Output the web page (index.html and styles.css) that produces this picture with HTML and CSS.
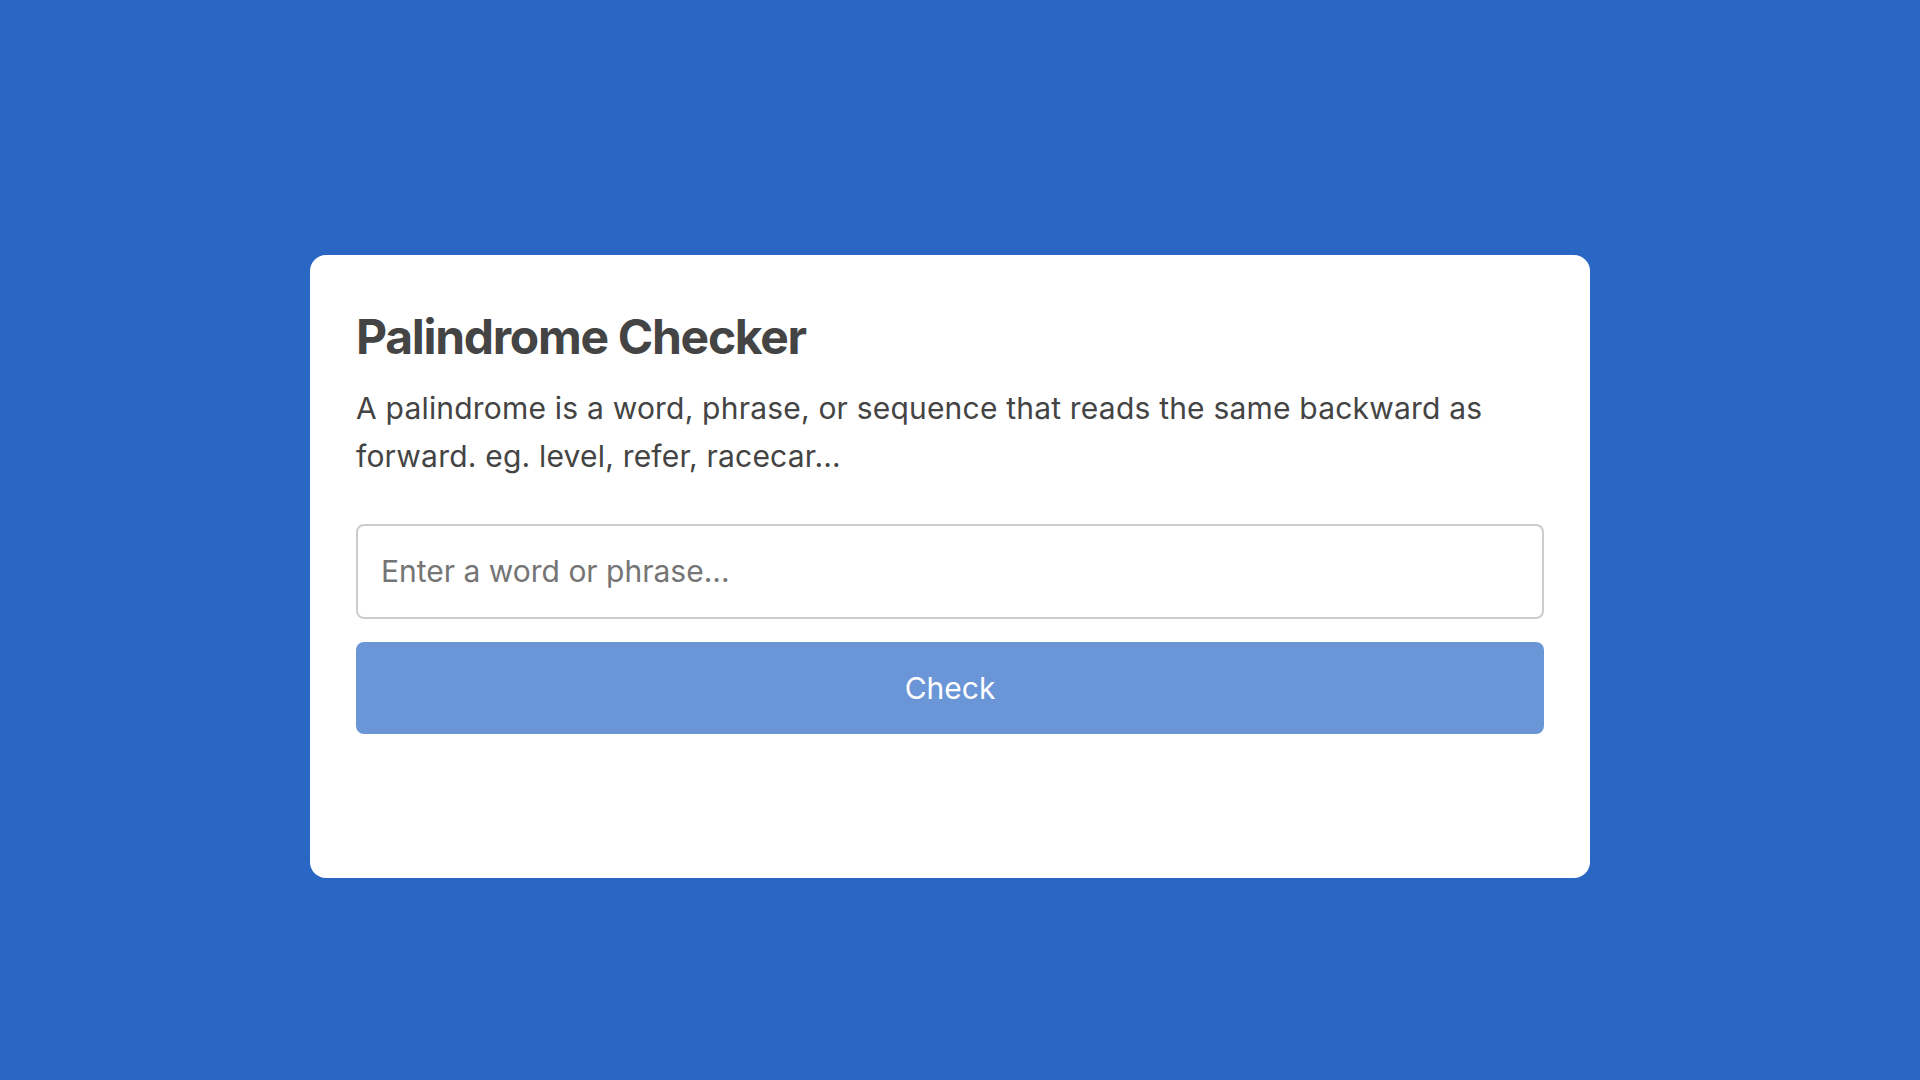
FILE: index.html
```html
<!DOCTYPE html>
<html lang="en">
<head>
    <meta charset="UTF-8">
    <meta name="viewport" content="width=device-width, initial-scale=1.0">
    <title>Palindrome Checker</title>
    <link rel="stylesheet" href="styles.css">
</head>
<body>
    <div class="container">
        <h1>Palindrome Checker</h1>
        <p>A palindrome is a word, phrase, or sequence that reads the same backward as forward. eg. level, refer, racecar...</p>

        <input type="text" id="word" class="word-input" placeholder="Enter a word or phrase...">
        <button id="checkBtn" class="btn">Check</button>

        <div id="result" class="result"></div>
    </div>
</body>
</html>
```

FILE: styles.css
```css
* { margin: 0; padding: 0; box-sizing: border-box; }
body {
    font-family: Inter, "Noto Sans", sans-serif;
    background: #2a67c4;
    color: #444;
    min-height: 100vh;
    padding: 255px 0 0 310px;
}
.container {
    width: 1280px;
    background: #fff;
    border-radius: 16px;
    padding: 52px 46px 46px;
}
.container h1 {
    font-size: 48px;
    font-weight: 700;
    line-height: normal;
    letter-spacing: -1.3px;
    margin-bottom: 18px;
}
.container p {
    font-size: 30px;
    line-height: 48px;
    letter-spacing: 0.2px;
    margin-bottom: 44px;
}
.word-input {
    display: block;
    width: 100%;
    font-family: inherit;
    font-size: 30px;
    line-height: 39px;
    padding: 26px 23px;
    border: 2px solid #ccc;
    border-radius: 8px;
    color: #444;
    outline: none;
}
.word-input::placeholder { color: #757575; }
.btn {
    display: block;
    width: 100%;
    margin-top: 23px;
    height: 92px;
    border: none;
    border-radius: 8px;
    background: #6a96d7;
    color: #fff;
    font-family: inherit;
    font-size: 30px;
    cursor: pointer;
}
.result { min-height: 98px; }
```
